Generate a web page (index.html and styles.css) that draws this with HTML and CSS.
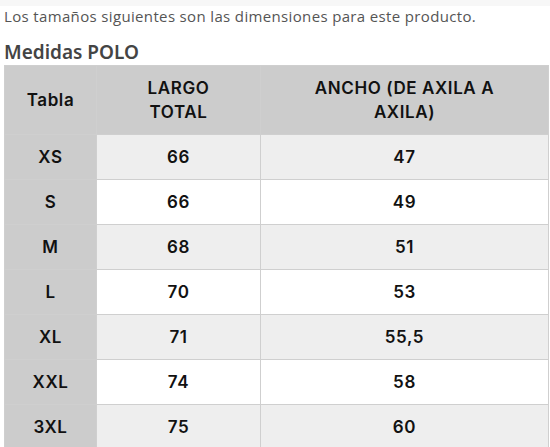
FILE: index.html
```html
<!DOCTYPE html>
<html lang="es">
<head>
    <meta charset="UTF-8">
    <meta name="viewport" content="width=device-width, initial-scale=1.0">
    <title>Medidas POLO</title>
    <link rel="stylesheet" href="styles.css">
</head>
<body>
    <div class="top-bar"></div>
    <div class="content">
        <p class="intro">Los tamaños siguientes son las dimensiones para este producto.</p>
        <h2>Medidas POLO</h2>
        <table class="size-table">
            <thead>
                <tr>
                    <th class="col-size">Tabla</th>
                    <th class="col-length">LARGO<br>TOTAL</th>
                    <th>ANCHO (DE AXILA A<br>AXILA)</th>
                </tr>
            </thead>
            <tbody>
                <tr><th>XS</th><td>66</td><td>47</td></tr>
                <tr><th>S</th><td>66</td><td>49</td></tr>
                <tr><th>M</th><td>68</td><td>51</td></tr>
                <tr><th>L</th><td>70</td><td>53</td></tr>
                <tr><th>XL</th><td>71</td><td>55,5</td></tr>
                <tr><th>XXL</th><td>74</td><td>58</td></tr>
                <tr><th>3XL</th><td>75</td><td>60</td></tr>
            </tbody>
        </table>
    </div>
</body>
</html>
```

FILE: styles.css
```css
* {
    margin: 0;
    padding: 0;
    box-sizing: border-box;
}

body {
    background: white;
    font-family: 'Open Sans', 'Noto Sans', sans-serif;
}

.top-bar {
    height: 6px;
    background: #f7f7f7;
}

.content {
    padding: 0 1px 0 4px;
}

.intro {
    color: #555;
    font-size: 15px;
    letter-spacing: 0.35px;
    line-height: 20px;
}

h2 {
    color: #444;
    font-family: 'Noto Sans', sans-serif;
    font-size: 19px;
    font-weight: 600;
    line-height: 24px;
    margin-top: 14px;
    margin-bottom: 1px;
}

.size-table {
    width: 100%;
    border-collapse: collapse;
    font-family: 'Inter', sans-serif;
    font-size: 17px;
    color: #111;
    text-align: center;
}

.size-table th,
.size-table td {
    border: 1px solid #cfcfcf;
    height: 45px;
    font-weight: 600;
    letter-spacing: 0.6px;
    line-height: 24px;
}

.size-table thead th {
    background: #cccccc;
    height: 68px;
    padding: 10px 4px;
}

.size-table .col-size {
    width: 92px;
}

.size-table .col-length {
    width: 164px;
}

.size-table tbody th {
    background: #cccccc;
}

.size-table tbody tr:nth-child(odd) td {
    background: #eeeeee;
}

.size-table tbody tr:nth-child(even) td {
    background: white;
}
```
